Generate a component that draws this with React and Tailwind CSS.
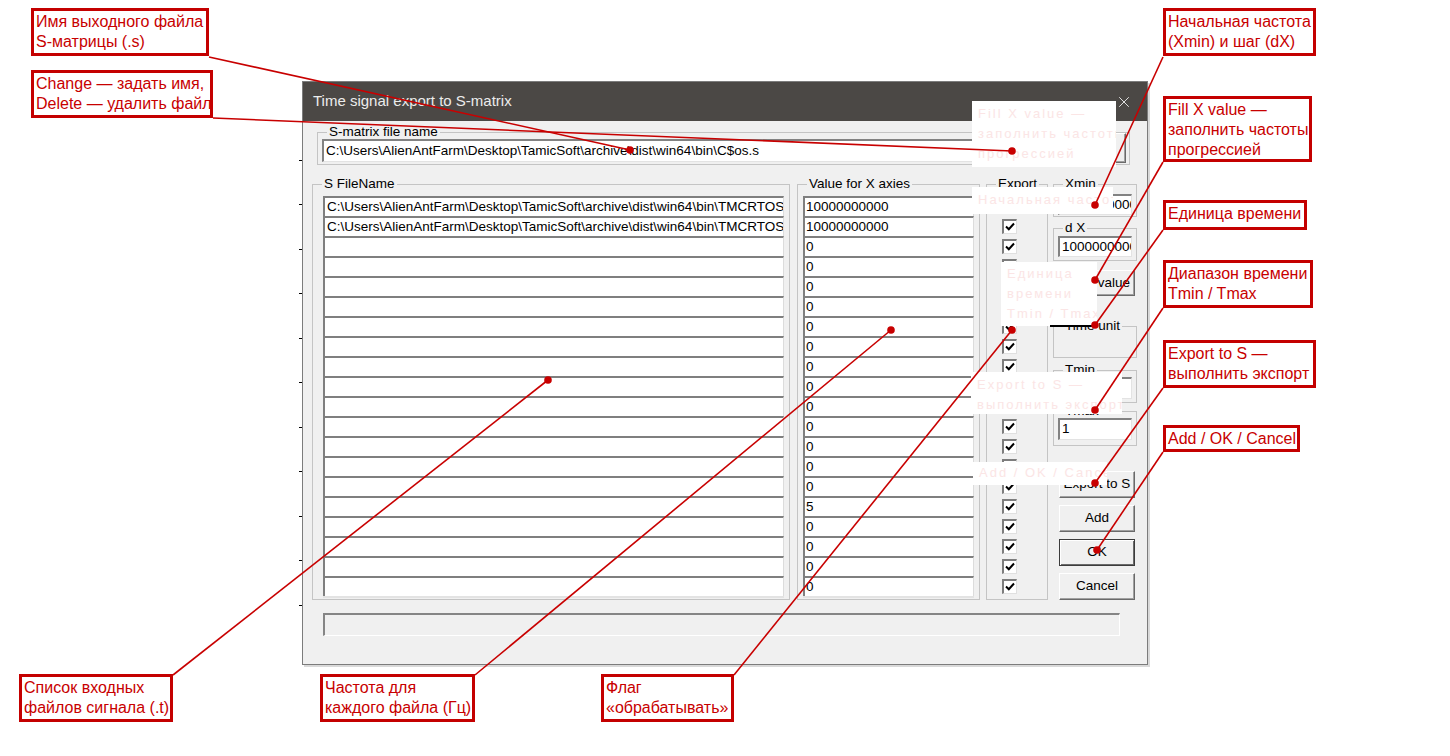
import { X } from 'lucide-react';

const FILE = 'C:\\Users\\AlienAntFarm\\Desktop\\TamicSoft\\archive\\dist\\win64\\bin\\TMCRTOS_signal.t';
const OUT = 'C:\\Users\\AlienAntFarm\\Desktop\\TamicSoft\\archive\\dist\\win64\\bin\\C$os.s';

const files = [FILE, FILE, '', '', '', '', '', '', '', '', '', '', '', '', '', '', '', '', '', ''];
const values = ['10000000000', '10000000000', '0', '0', '0', '0', '0', '0', '0', '0', '0', '0', '0', '0', '0', '5', '0', '0', '0', '0'];

const callouts = [
  { pos: 'left-[31px] top-[8px] w-[178px] h-[48px]', lines: ['Имя выходного файла', 'S-матрицы (.s)'] },
  { pos: 'left-[31px] top-[70px] w-[182px] h-[48px]', lines: ['Change — задать имя,', 'Delete — удалить файл'] },
  { pos: 'left-[1163px] top-[8px] w-[153px] h-[48px]', lines: ['Начальная частота', '(Xmin) и шаг (dX)'] },
  { pos: 'left-[1163px] top-[96px] w-[149px] h-[66px]', lines: ['Fill X value —', 'заполнить частоты', 'прогрессией'] },
  { pos: 'left-[1163px] top-[200px] w-[144px] h-[30px]', lines: ['Единица времени'] },
  { pos: 'left-[1163px] top-[260px] w-[150px] h-[48px]', lines: ['Диапазон времени', 'Tmin / Tmax'] },
  { pos: 'left-[1163px] top-[340px] w-[153px] h-[48px]', lines: ['Export to S —', 'выполнить экспорт'] },
  { pos: 'left-[1163px] top-[425px] w-[137px] h-[27px]', lines: ['Add / OK / Cancel'] },
  { pos: 'left-[19px] top-[674px] w-[154px] h-[48px]', lines: ['Список входных', 'файлов сигнала (.t)'] },
  { pos: 'left-[320px] top-[674px] w-[155px] h-[48px]', lines: ['Частота для', 'каждого файла (Гц)'] },
  { pos: 'left-[601px] top-[674px] w-[133px] h-[48px]', lines: ['Флаг', '«обрабатывать»'] },
];

// erased callouts left behind on the screenshot
const patches = [
  { pos: 'left-[972px] top-[101px] w-[144px] h-[66px] pt-[3px]', lines: ['Fill X value —', 'заполнить частоты', 'прогрессией'] },
  { pos: 'left-[972px] top-[187px] w-[141px] h-[27px] pt-[3px]', lines: ['Начальная частота (Xmin)'] },
  { pos: 'left-[1001px] top-[262px] w-[96px] h-[64px] pt-[2px]', lines: ['Единица', 'времени', 'Tmin / Tmax'] },
  { pos: 'left-[971px] top-[372px] w-[151px] h-[42px] pt-[3px]', lines: ['Export to S —', 'выполнить экспорт'] },
  { pos: 'left-[973px] top-[462px] w-[134px] h-[23px] pt-[1px]', lines: ['Add / OK / Cancel'] },
];

const ticks = [
  'top-[160px]', 'top-[204px]', 'top-[249px]', 'top-[293px]', 'top-[338px]', 'top-[382px]',
  'top-[427px]', 'top-[471px]', 'top-[516px]', 'top-[560px]', 'top-[605px]',
];

const leaders = [
  [209, 57, 630, 150],
  [213, 118, 1012, 151],
  [1163, 57, 1095, 205],
  [1163, 162, 1095, 280],
  [1163, 230, 1095, 325],
  [1163, 308, 1095, 410],
  [1163, 388, 1095, 483],
  [1163, 452, 1097, 550],
  [173, 675, 548, 380],
  [475, 675, 891, 330],
  [734, 675, 1012, 330],
];

function Group({ label, className = '', children }) {
  return (
    <fieldset className={`min-w-0 shrink-0 border border-[#c4c4c4] ${className}`}>
      <legend className="ml-[9px] px-[2px] text-[13.5px] leading-[14px]">{label}</legend>
      {children}
    </fieldset>
  );
}

function Field({ children, className = '' }) {
  return (
    <div className={`min-w-0 bg-white border-t-2 border-l-2 border-t-[#828282] border-l-[#828282] border-r border-b border-r-[#e3e3e3] border-b-[#e3e3e3] overflow-hidden whitespace-nowrap text-[13.5px] leading-[18px] pl-[2px] ${className}`}>
      {children}
    </div>
  );
}

function Btn({ children, primary, className = '' }) {
  const edge = primary
    ? 'border border-[#3c3c3c] shadow-[inset_1px_1px_0_#ffffff,inset_-1px_-1px_0_#6a6a6a]'
    : 'border border-t-white border-l-white border-r-[#6a6a6a] border-b-[#6a6a6a] shadow-[inset_-1px_-1px_0_#a0a0a0]';
  return (
    <div className={`flex shrink-0 items-center justify-center overflow-hidden whitespace-nowrap bg-[#f0f0f0] text-[13.5px] ${edge} ${className}`}>
      {children}
    </div>
  );
}

function Check() {
  return (
    <div className="flex h-[20px] items-center pl-[15px]">
      <div className="flex h-[15px] w-[15px] items-center justify-center border-t-2 border-l-2 border-t-[#7d7d7d] border-l-[#7d7d7d] border-r border-b border-r-[#e0e0e0] border-b-[#e0e0e0] bg-white">
        <svg width="10" height="9" viewBox="0 0 10 9">
          <path d="M1 4.5 L3.8 7.2 L9 1.5" fill="none" stroke="#000" strokeWidth="2" />
        </svg>
      </div>
    </div>
  );
}

function Row({ children, className = '' }) {
  return (
    <div className={`h-[20px] overflow-hidden whitespace-nowrap border-t-2 border-l-2 border-t-[#7f7f7f] border-l-[#7f7f7f] border-r border-r-[#dcdcdc] bg-white text-[13.5px] leading-[18px] ${className}`}>
      {children}
    </div>
  );
}

function Dialog() {
  return (
    <div className="ml-[302px] mt-[80px] flex h-[584px] w-[846px] flex-col border border-[#7c7c7c] bg-[#f0f0f0] text-black shadow-[2px_2px_0_#d9d9d9]">
      <div className="flex h-[39px] shrink-0 items-center justify-between bg-[#4b4845] pl-[10px] pr-[14px]">
        <span className="text-[15px] text-[#ececec]">Time signal export to S-matrix</span>
        <X className="h-[18px] w-[18px] text-[#e4e4e4]" strokeWidth={1.3} />
      </div>

      {/* output file */}
      <Group label="S-matrix file name" className="ml-[14px] mt-[4px] h-[40px] w-[813px]">
        <div className="flex pl-[4px] pr-[3px]">
          <Field className="h-[23px] flex-1 leading-[20px]">{OUT}</Field>
          <Btn className="-mt-[6px] ml-[3px] h-[30px] w-[56px]">...</Btn>
        </div>
      </Group>

      <div className="ml-[9px] mt-[12px] flex">
        <Group label="S FileName" className="h-[423px] w-[478px]">
          <div className="ml-[10px] mr-[5px] mt-[5px]">
            {files.map((f, i) => (
              <Row key={i} className="pl-[2px]">{f}</Row>
            ))}
            <div className="h-[2px] bg-[#e3e3e3]" />
          </div>
        </Group>

        <Group label="Value for X axies" className="ml-[7px] h-[423px] w-[183px]">
          <div className="ml-[5px] mr-[5px] mt-[5px]">
            {values.map((v, i) => (
              <Row key={i} className="pl-[1px]">{v}</Row>
            ))}
            <div className="h-[2px] bg-[#e3e3e3]" />
          </div>
        </Group>

        <Group label="Export" className="ml-[6px] h-[423px] w-[62px]">
          <div className="mt-[5px]">
            {values.map((_, i) => (
              <Check key={i} />
            ))}
          </div>
        </Group>

        <div className="ml-[5px] flex w-[84px] shrink-0 flex-col">
          <Group label="Xmin" className="h-[40px] w-[84px]">
            <Field className="ml-[4px] mt-[3px] h-[21px] w-[74px]">10000000000</Field>
          </Group>
          <Group label="d X" className="mt-[4px] h-[40px] w-[84px]">
            <Field className="ml-[4px] mt-[1px] h-[21px] w-[74px]">10000000000</Field>
          </Group>
          <Btn className="ml-[6px] mt-[9px] h-[26px] w-[76px]">Fill X value</Btn>
          <Group label="Time unit" className="mt-[23px] h-[39px] w-[84px]" />
          <Group label="Tmin" className="mt-[5px] h-[40px] w-[84px]">
            <Field className="ml-[4px] h-[22px] w-[74px]">0</Field>
          </Group>
          <Group label="Tmax" className="mt-[1px] h-[42px] w-[84px]">
            <Field className="ml-[4px] h-[22px] w-[74px]">1</Field>
          </Group>
          <Btn className="ml-[6px] mt-[25px] h-[27px] w-[76px]">Export to S</Btn>
          <Btn className="ml-[6px] mt-[7px] h-[27px] w-[76px]">Add</Btn>
          <Btn primary className="ml-[6px] mt-[7px] h-[27px] w-[76px]">OK</Btn>
          <Btn className="ml-[6px] mt-[7px] h-[27px] w-[76px]">Cancel</Btn>
        </div>
      </div>

      {/* progress */}
      <div className="ml-[20px] mt-[13px] h-[23px] w-[797px] border-t-2 border-l-2 border-t-[#858585] border-l-[#858585] border-r border-b border-r-white border-b-white bg-[#f0f0f0]" />
    </div>
  );
}

export default function App() {
  return (
    <div className="relative h-[756px] w-[1450px] overflow-hidden bg-white pt-px font-['Liberation_Sans',Arial,sans-serif]">
      <Dialog />

      {ticks.map((t) => (
        <div key={t} className={`absolute left-[299px] h-px w-[3px] bg-black ${t}`} />
      ))}

      {patches.map((p, i) => (
        <div key={i} className={`absolute overflow-hidden whitespace-nowrap bg-white pl-[6px] text-[13px] leading-[20px] tracking-[2px] text-[#fbe5e5] ${p.pos}`}>
          {p.lines.map((l) => (
            <div key={l}>{l}</div>
          ))}
        </div>
      ))}
      <div className="absolute left-[1050px] top-[325px] h-[2px] w-[46px] bg-black" />

      <svg className="pointer-events-none absolute left-0 top-0" width="1450" height="756">
        {leaders.map(([x1, y1, x2, y2], i) => (
          <g key={i}>
            <line x1={x1} y1={y1} x2={x2} y2={y2} stroke="#c80000" strokeWidth="1.6" />
            <circle cx={x2} cy={y2} r="3.8" fill="#c80000" />
          </g>
        ))}
      </svg>

      {callouts.map((c, i) => (
        <div key={i} className={`absolute whitespace-nowrap border-[3px] border-[#c40000] bg-white px-[2px] pt-px text-[16px] leading-[20px] text-[#c80000] ${c.pos}`}>
          {c.lines.map((l) => (
            <div key={l}>{l}</div>
          ))}
        </div>
      ))}
    </div>
  );
}
